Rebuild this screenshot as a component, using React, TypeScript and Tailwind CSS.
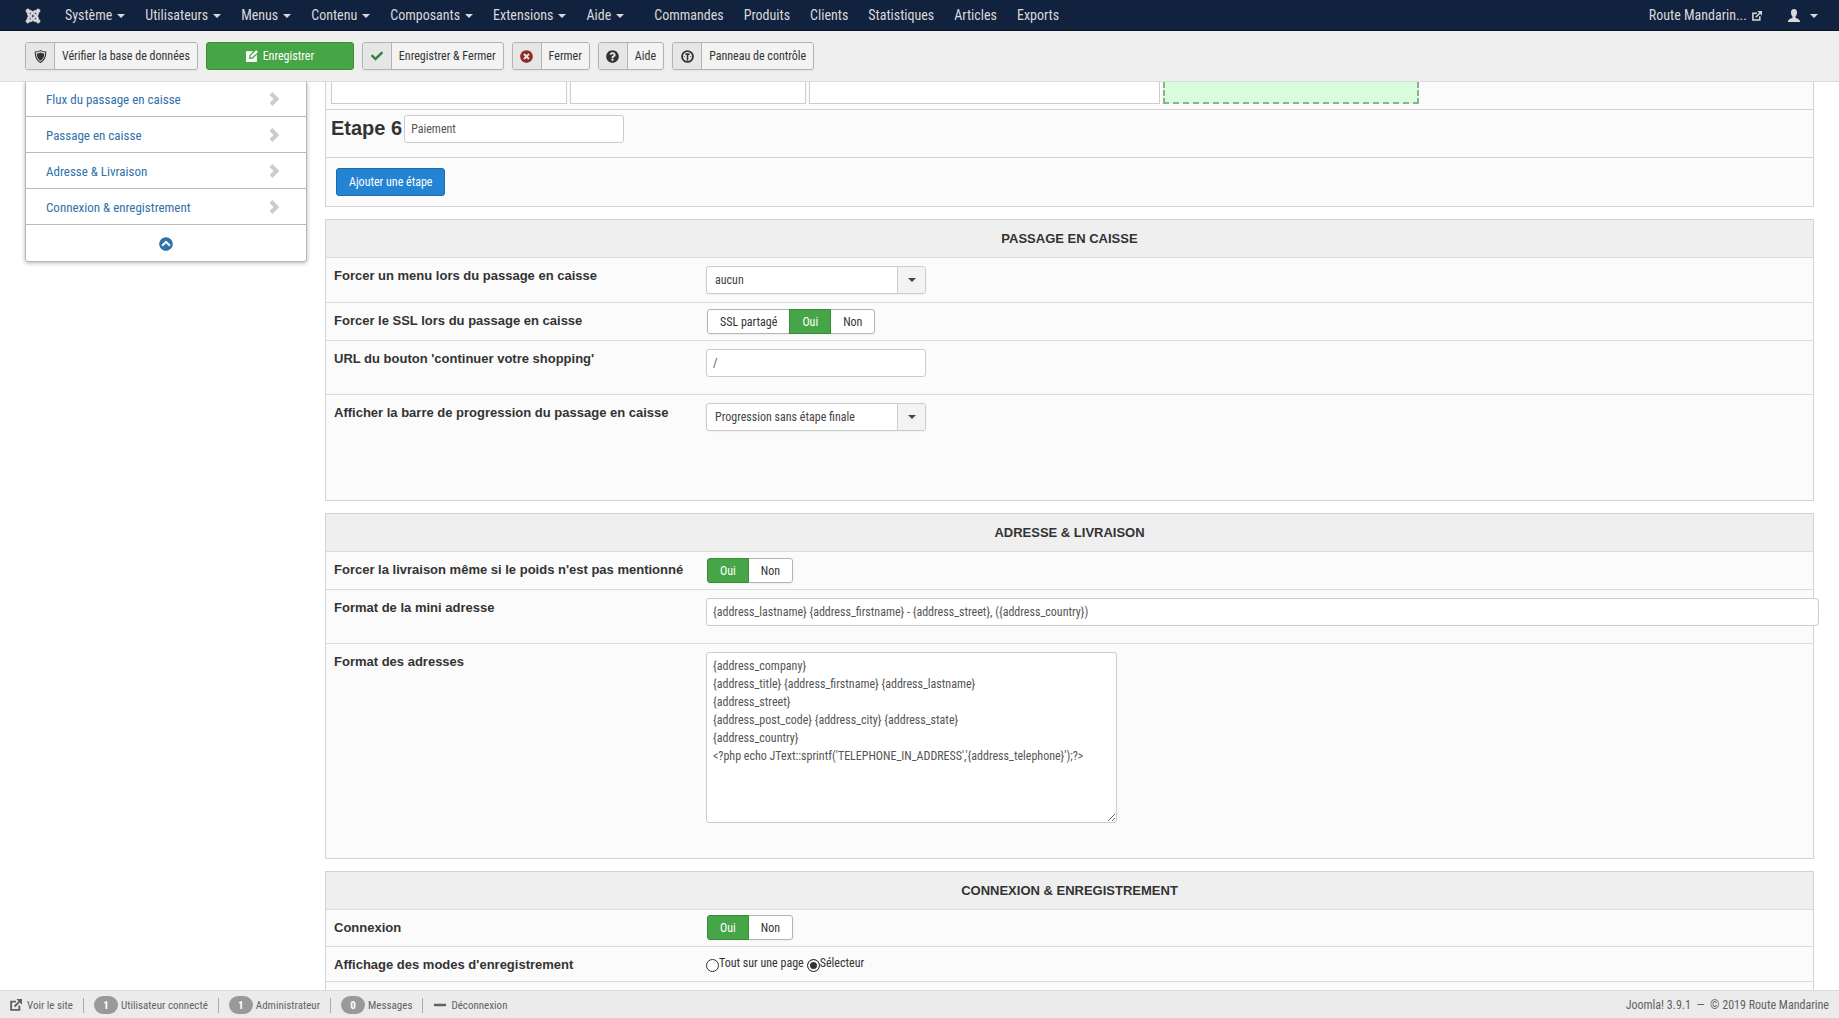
import React from "react";
import { FaJoomla, FaCheck, FaTimesCircle, FaQuestionCircle, FaMinus, FaChevronCircleUp } from "react-icons/fa";

const menus = ["Système", "Utilisateurs", "Menus", "Contenu", "Composants", "Extensions", "Aide"];
const shortcuts = ["Commandes", "Produits", "Clients", "Statistiques", "Articles", "Exports"];
const sections = ["Flux du passage en caisse", "Passage en caisse", "Adresse & Livraison", "Connexion & enregistrement"];

const addressFormat = `{address_company}
{address_title} {address_firstname} {address_lastname}
{address_street}
{address_post_code} {address_city} {address_state}
{address_country}
<?php echo JText::sprintf('TELEPHONE_IN_ADDRESS','{address_telephone}');?>`;

function Caret({ className = "" }: { className?: string }) {
  return (
    <svg className={`h-1 w-2 ${className}`} viewBox="0 0 8 4" fill="currentColor" aria-hidden="true">
      <path d="M0 0h8L4 4z" />
    </svg>
  );
}

function OutIcon({ className = "" }: { className?: string }) {
  return (
    <svg className={className} viewBox="0 0 16 16" fill="none" stroke="currentColor" strokeWidth="2.500" aria-hidden="true">
      <path d="M8 3.500H1.500v11h11V8.500M6 10l6.500-6.500" />
      <path d="M8.500 0H16v7.500z" fill="currentColor" stroke="none" />
    </svg>
  );
}

function ShieldIcon() {
  return (
    <svg className="h-[13px] w-[13px]" viewBox="0 0 16 16" aria-hidden="true">
      <path d="M8 .8c2 1.2 4.300 1.600 6.500 1.600 0 6-1 10-6.500 12.900C2.500 12.400 1.500 8.400 1.500 2.400 3.700 2.400 6 2 8 .8z" fill="none" stroke="currentColor" strokeWidth="1.300" />
      <path d="M8 3c1.500.8 3 1.200 4.600 1.300C12.500 8.500 11.500 11.400 8 13.300 4.500 11.400 3.500 8.500 3.400 4.300 5 4.200 6.500 3.800 8 3z" fill="currentColor" />
    </svg>
  );
}

function EditIcon() {
  return (
    <svg className="h-3 w-3" viewBox="0 0 16 16" aria-hidden="true">
      <path d="M0 1.500h9.500L4.500 7 4 12l5-.5 5.500-5.500v10H0z" fill="currentColor" />
      <path d="M5.700 10.300 6.200 7.700 13.500 0 16 2.500 8.300 9.800z" fill="currentColor" />
    </svg>
  );
}

function GaugeIcon() {
  return (
    <svg className="h-[13px] w-[13px]" viewBox="0 0 16 16" fill="none" stroke="currentColor" aria-hidden="true">
      <circle cx="8" cy="8" r="6.700" strokeWidth="2.200" />
      <path d="M8 6v7M5.500 5h5" strokeWidth="2" />
      <path d="M3.500 8h1M11.500 8h1" strokeWidth="1.500" />
    </svg>
  );
}

function UserIcon() {
  return (
    <svg className="h-[13px] w-3" viewBox="0 0 16 16" preserveAspectRatio="none" fill="currentColor" aria-hidden="true">
      <path d="M8 0c2.800 0 4 1.800 4 4.200 0 2-.8 3.800-1.900 4.800v2c2.800.7 5.900 1.500 5.900 5H0c0-3.500 3.100-4.300 5.900-5V9C4.800 8 4 6.200 4 4.200 4 1.800 5.200 0 8 0z" />
    </svg>
  );
}

function ChevronIcon() {
  return (
    <svg className="h-[14px] w-[11px]" viewBox="0 0 11 14" fill="none" stroke="currentColor" strokeWidth="4" aria-hidden="true">
      <path d="M2 1.500 7.500 7 2 12.500" />
    </svg>
  );
}

function ToolbarButton({ icon, children }: { icon: React.ReactNode; children: React.ReactNode }) {
  return (
    <button type="button" className="flex h-7 items-stretch overflow-hidden rounded-[3px] border border-[#b3b3b3] bg-[#f3f3f3] text-[12px] text-[#333] shadow-[0_1px_2px_rgba(0,0,0,0.05)]">
      <span className="flex w-[29px] items-center justify-center border-r border-[#b3b3b3] bg-[#e6e6e6]">{icon}</span>
      <span className="flex items-center px-[7px]">{children}</span>
    </button>
  );
}

function Panel({ title, children }: { title: string; children: React.ReactNode }) {
  return (
    <section className="mt-3 border border-[#d3d3d3] bg-[#fbfbfb]">
      <h2 className="bg-[#efefef] pt-[10px] pb-[9px] text-center font-['Liberation_Sans',sans-serif] text-[13px] leading-[18px] font-bold uppercase">{title}</h2>
      {children}
    </section>
  );
}

function Row({ label, htmlFor, className, children }: { label: string; htmlFor: string; className: string; children?: React.ReactNode }) {
  return (
    <div className="flex border-t border-[#dbdbdb]">
      <div className="w-[380px] shrink-0 pt-[9px] pl-2 font-['Liberation_Sans',sans-serif] text-[13px] leading-[18px] font-bold">
        <label htmlFor={htmlFor}>{label}</label>
      </div>
      <div className={`min-w-0 flex-1 ${className}`}>{children}</div>
    </div>
  );
}

function Select({ id, value }: { id: string; value: string }) {
  return (
    <div className="relative h-7 w-[220px]">
      <select id={id} defaultValue={value} className="h-7 w-full appearance-none rounded-[3px] border border-[#ccc] bg-white pr-8 pl-2 text-[12px] text-[#444] shadow-[0_1px_2px_rgba(0,0,0,0.05)]">
        <option>{value}</option>
      </select>
      <span className="pointer-events-none absolute inset-y-px right-px flex w-7 items-center justify-center rounded-r-[2px] border-l border-[#ccc] bg-[#f3f3f3] text-[#444]">
        <Caret />
      </span>
    </div>
  );
}

function Toggle({ id, options, value }: { id: string; options: string[]; value: string }) {
  return (
    <div className="ml-px flex h-[25px] w-fit rounded-[3px] shadow-[0_1px_2px_rgba(0,0,0,0.05)]">
      {options.map((option) => (
        <label
          key={option}
          className="-ml-px flex cursor-pointer items-center border border-[#b3b3b3] bg-white px-3 text-[12px] text-[#333] first:ml-0 first:rounded-l-[3px] last:rounded-r-[3px] has-checked:z-10 has-checked:border-[#3b8b3b] has-checked:bg-[#46a546] has-checked:text-white"
        >
          <input id={option === value ? id : undefined} type="radio" name={id} defaultChecked={option === value} className="sr-only" />
          {option}
        </label>
      ))}
    </div>
  );
}

const inputClass = "block h-7 rounded-[3px] border border-[#ccc] bg-white px-[6px] text-[12px] text-[#555]";
const radioClass = "mt-[5px] h-[13px] w-[13px] appearance-none rounded-full border border-[#333] bg-white checked:bg-[#333] checked:shadow-[inset_0_0_0_2px_white]";

export default function App() {
  return (
    <div className="flex h-screen flex-col overflow-hidden bg-white font-['Roboto_Condensed','Roboto',sans-serif] text-[#333]">
      <nav className="flex h-[31px] shrink-0 items-center border-b border-[#0a1527] bg-[#10223e] px-[25px] pt-px text-[14px] text-[#d9d9d9]">
        <a href="#" aria-label="Joomla!"><FaJoomla className="h-4 w-4" stroke="currentColor" strokeWidth="24" /></a>
        <ul className="ml-6 flex items-center gap-5">
          {menus.map((menu) => (
            <li key={menu}>
              <a href="#" className="flex items-center gap-[5px]">{menu}<Caret className="mt-px" /></a>
            </li>
          ))}
        </ul>
        <ul className="ml-[30px] flex items-center gap-5">
          {shortcuts.map((item) => (
            <li key={item}><a href="#">{item}</a></li>
          ))}
        </ul>
        <a href="#" className="ml-auto flex items-center gap-[5px]">Route Mandarin...<OutIcon className="h-[10px] w-[10px]" /></a>
        <button type="button" aria-label="Compte" className="-mr-1 ml-[26px] flex items-center gap-[10px]"><UserIcon /><Caret /></button>
      </nav>

      <div className="flex h-[51px] shrink-0 items-center gap-2 border-b border-[#dbdbdb] bg-[#efefef] px-[25px]">
        <ToolbarButton icon={<ShieldIcon />}>Vérifier la base de données</ToolbarButton>
        <button type="button" className="flex h-7 w-[148px] items-center justify-center gap-[5px] rounded-[3px] border border-[#3b8b3b] bg-[#46a546] text-[12px] text-white">
          <EditIcon />Enregistrer
        </button>
        <ToolbarButton icon={<FaCheck className="h-3 w-3 text-[#378137]" />}>Enregistrer &amp; Fermer</ToolbarButton>
        <ToolbarButton icon={<FaTimesCircle className="h-[13px] w-[13px] text-[#942a25]" />}>Fermer</ToolbarButton>
        <ToolbarButton icon={<FaQuestionCircle className="h-[13px] w-[13px]" />}>Aide</ToolbarButton>
        <ToolbarButton icon={<GaugeIcon />}>Panneau de contrôle</ToolbarButton>
      </div>

      <div className="flex min-h-0 flex-1 items-start gap-[18px] overflow-hidden px-[25px]">
        <aside className="w-[282px] shrink-0 rounded-b-[3px] border border-t-0 border-[#b8b8b8] text-[13px] shadow-[0_1px_4px_rgba(0,0,0,0.3)]">
          <ul className="-mt-px">
            {sections.map((section) => (
              <li key={section} className="border-b border-[#bbb]">
                <a href="#" className="flex h-[35px] items-center justify-between pr-[26px] pl-5 text-[#3071a9]">
                  <span className="pt-[3px]">{section}</span>
                  <span className="text-[#ccc]"><ChevronIcon /></span>
                </a>
              </li>
            ))}
          </ul>
          <a href="#" aria-label="Haut de page" className="flex h-[36px] items-center justify-center pt-px text-[#3071a9]"><FaChevronCircleUp className="h-[14px] w-[14px]" /></a>
        </aside>

        <main className="min-w-0 flex-1">
          <section className="border border-t-0 border-[#d3d3d3] bg-[#fbfbfb]">
            <div className="flex h-[27px] items-start gap-[3px] pl-[5px]">
              <div className="h-[22px] w-[236px] border border-t-0 border-[#ccc] bg-white" />
              <div className="h-[22px] w-[236px] border border-t-0 border-[#ccc] bg-white" />
              <div className="h-[22px] w-[351px] border border-t-0 border-[#ccc] bg-white" />
              <div className="h-[22px] w-[256px] border-2 border-t-0 border-dashed border-[#8bb08f] bg-[#d9fddc]" />
            </div>
            <div className="flex gap-[2px] border-t border-[#d3d3d3] pt-[5px] pb-[14px] pl-[5px]">
              <label htmlFor="step" className="font-['Liberation_Sans',sans-serif] text-[20px] leading-[26px] font-bold">Etape 6</label>
              <input id="step" defaultValue="Paiement" className={`${inputClass} w-[220px]`} />
            </div>
            <div className="border-t border-[#d3d3d3] p-[10px]">
              <button type="button" className="h-7 rounded-[3px] border border-[#1c6aa9] bg-[#2384d3] px-3 text-[12px] text-white">Ajouter une étape</button>
            </div>
          </section>

          <Panel title="Passage en caisse">
            <Row label="Forcer un menu lors du passage en caisse" htmlFor="menu" className="py-2"><Select id="menu" value="aucun" /></Row>
            <Row label="Forcer le SSL lors du passage en caisse" htmlFor="ssl" className="py-[6px]"><Toggle id="ssl" options={["SSL partagé", "Oui", "Non"]} value="Oui" /></Row>
            <Row label="URL du bouton 'continuer votre shopping'" htmlFor="url" className="pt-2 pb-[17px]"><input id="url" defaultValue="/" className={`${inputClass} w-[220px]`} /></Row>
            <Row label="Afficher la barre de progression du passage en caisse" htmlFor="bar" className="pt-2 pb-[69px]"><Select id="bar" value="Progression sans étape finale" /></Row>
          </Panel>

          <Panel title="Adresse & Livraison">
            <Row label="Forcer la livraison même si le poids n'est pas mentionné" htmlFor="shipping" className="py-[6px]"><Toggle id="shipping" options={["Oui", "Non"]} value="Oui" /></Row>
            <Row label="Format de la mini adresse" htmlFor="mini" className="-mr-[6px] pt-2 pb-[17px]">
              <input id="mini" defaultValue="{address_lastname} {address_firstname} - {address_street}, ({address_country})" className={`${inputClass} w-full`} />
            </Row>
            <Row label="Format des adresses" htmlFor="format" className="pt-2 pb-[35px]">
              <textarea id="format" defaultValue={addressFormat} className="block h-[171px] w-[411px] rounded-[3px] border border-[#ccc] bg-white px-[6px] py-1 text-[12px] leading-[18px] text-[#555]" />
            </Row>
          </Panel>

          <Panel title="Connexion & enregistrement">
            <Row label="Connexion" htmlFor="login" className="pt-[5px] pb-[6px]"><Toggle id="login" options={["Oui", "Non"]} value="Oui" /></Row>
            <Row label="Affichage des modes d'enregistrement" htmlFor="mode-page" className="flex items-center gap-[3px] pt-1 pb-[6px] text-[12px] leading-6">
              <span className="flex items-center"><input id="mode-page" type="radio" name="mode" className={radioClass} /><label htmlFor="mode-page">Tout sur une page</label></span>
              <span className="flex items-center"><input id="mode-select" type="radio" name="mode" defaultChecked className={radioClass} /><label htmlFor="mode-select">Sélecteur</label></span>
            </Row>
            <div className="h-10 border-t border-[#dbdbdb]" />
          </Panel>
        </main>
      </div>

      <footer className="flex h-[28px] shrink-0 items-center border-t border-[#dbdbdb] bg-[#ebebeb] px-[10px] pt-px text-[12px] text-[#626262]">
        <div className="flex items-center gap-[10px] text-[11px] leading-[15px]">
          <a href="#" className="flex items-center gap-[5px]"><OutIcon className="h-3 w-3" />Voir le site</a>
          {[["1", "Utilisateur connecté"], ["1", "Administrateur"], ["0", "Messages"]].map(([count, text]) => (
            <a key={text} href="#" className="flex items-center border-l border-[#aaa] pl-[10px]">
              <span className="-my-1 mr-[3px] flex h-[18px] w-6 items-center justify-center rounded-full bg-[#999] font-bold text-white">{count}</span>
              {text}
            </a>
          ))}
          <a href="#" className="flex items-center gap-1 border-l border-[#aaa] pl-[10px]"><FaMinus className="h-[14px] w-[14px]" />Déconnexion</a>
        </div>
        <p className="ml-auto">Joomla! 3.9.1 &nbsp;—&nbsp; © 2019 Route Mandarine</p>
      </footer>
    </div>
  );
}
